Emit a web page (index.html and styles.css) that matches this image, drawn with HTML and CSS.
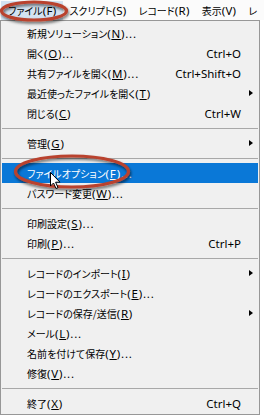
FILE: index.html
```html
<!DOCTYPE html>
<html lang="ja">
<head>
<meta charset="utf-8">
<link rel="stylesheet" href="styles.css">
</head>
<body>
<div class="bar">
  <span class="bi on">ファイル<span class="k">(F)</span></span>
  <span class="bi">スクリプト<span class="k">(S)</span></span>
  <span class="bi">レコード<span class="k">(R)</span></span>
  <span class="bi">表示<span class="k">(V)</span></span>
  <span class="bi">レ</span>
</div>
<div class="menu">
  <div class="item"><span>新規ソリューション<span class="k">(<u>N</u>)...</span></span><span class="sc"></span><span></span></div>
  <div class="item"><span>開く<span class="k">(<u>O</u>)...</span></span><span class="sc">Ctrl+O</span><span></span></div>
  <div class="item"><span>共有ファイルを開く<span class="k">(<u>M</u>)...</span></span><span class="sc">Ctrl+Shift+O</span><span></span></div>
  <div class="item"><span>最近使ったファイルを開く<span class="k">(<u>T</u>)</span></span><span class="sc"></span><span class="ar"></span></div>
  <div class="item"><span>閉じる<span class="k">(<u>C</u>)</span></span><span class="sc">Ctrl+W</span><span></span></div>
  <div class="sep"></div>
  <div class="item"><span>管理<span class="k">(<u>G</u>)</span></span><span class="sc"></span><span class="ar"></span></div>
  <div class="sep"></div>
  <div class="item sel"><span>ファイルオプション<span class="k">(<u>F</u>)...</span></span><span class="sc"></span><span></span></div>
  <div class="item"><span>パスワード変更<span class="k">(<u>W</u>)...</span></span><span class="sc"></span><span></span></div>
  <div class="sep"></div>
  <div class="item"><span>印刷設定<span class="k">(<u>S</u>)...</span></span><span class="sc"></span><span></span></div>
  <div class="item"><span>印刷<span class="k">(<u>P</u>)...</span></span><span class="sc">Ctrl+P</span><span></span></div>
  <div class="sep"></div>
  <div class="item"><span>レコードのインポート<span class="k">(<u>I</u>)</span></span><span class="sc"></span><span class="ar"></span></div>
  <div class="item"><span>レコードのエクスポート<span class="k">(<u>E</u>)...</span></span><span class="sc"></span><span></span></div>
  <div class="item"><span>レコードの保存/送信<span class="k">(<u>R</u>)</span></span><span class="sc"></span><span class="ar"></span></div>
  <div class="item"><span>メール<span class="k">(<u>L</u>)...</span></span><span class="sc"></span><span></span></div>
  <div class="item"><span>名前を付けて保存<span class="k">(<u>Y</u>)...</span></span><span class="sc"></span><span></span></div>
  <div class="item"><span>修復<span class="k">(<u>V</u>)...</span></span><span class="sc"></span><span></span></div>
  <div class="sep"></div>
  <div class="item"><span>終了<span class="k">(<u>X</u>)</span></span><span class="sc">Ctrl+Q</span><span></span></div>
</div>
<svg class="overlay" width="264" height="416" viewBox="0 0 264 416">
  <defs>
    <filter id="sh" x="-20%" y="-50%" width="140%" height="200%">
      <feGaussianBlur in="SourceAlpha" stdDeviation="1.8"/>
      <feOffset dx="1" dy="1.5" result="b"/>
      <feComponentTransfer><feFuncA type="linear" slope="0.6"/></feComponentTransfer>
      <feMerge><feMergeNode/><feMergeNode in="SourceGraphic"/></feMerge>
    </filter>
  </defs>
  <ellipse cx="34" cy="11" rx="32.5" ry="9" fill="none" stroke="#b9432f" stroke-width="3.2" filter="url(#sh)"/>
  <ellipse cx="72" cy="171.5" rx="56.5" ry="15.5" fill="none" stroke="#b9432f" stroke-width="3.2" filter="url(#sh)"/>
  <path d="M50.5 172.5 L50.5 186 L53.5 183 L56 188.5 L58 187.6 L55.6 182.2 L60 182.2 Z" fill="#fff" stroke="#000" stroke-width="1" stroke-linejoin="round"/>
</svg>
</body>
</html>
```

FILE: styles.css
```css
html, body {
  margin: 0;
  padding: 0;
}
body {
  width: 264px;
  height: 416px;
  overflow: hidden;
  position: relative;
  background: #ffffff;
  color: #000;
  font-family: "Noto Sans CJK JP", sans-serif;
  font-size: 10px;
  font-feature-settings: "palt";
}
.k {
  font-family: "Noto Sans", "Noto Sans CJK JP", sans-serif;
  font-size: 11.5px;
  letter-spacing: 0.8px;
  font-feature-settings: normal;
}
.bar {
  height: 20px;
  display: flex;
  align-items: center;
  padding-left: 1px;
  background: #fbfbfb;
}
.bi {
  height: 19px;
  line-height: 19px;
  padding: 0 6px;
  white-space: nowrap;
}
.bi .k {
  letter-spacing: 0.3px;
}
.bi.on {
  background: #d3e3f2;
  padding: 0 7px;
}
.menu {
  width: 258px;
  border: 1px solid #979797;
  padding: 2px 0 1px 0;
  background: #f0f0f0;
}
.item {
  display: grid;
  grid-template-columns: 1fr auto 17px;
  align-items: center;
  height: 20px;
  margin: 0 1px;
  padding-left: 25px;
  white-space: nowrap;
}
.item.sel {
  background: #0a78d7;
  color: #fff;
}
.sc {
  font-family: "Noto Sans", sans-serif;
  font-size: 11.5px;
}
.ar {
  width: 0;
  height: 0;
  margin-left: 8px;
  border-left: 4px solid #000;
  border-top: 3.5px solid transparent;
  border-bottom: 3.5px solid transparent;
}
.sep {
  height: 1px;
  margin: 5px 1px 4px 1px;
  background: #a8a8a8;
}
.overlay {
  position: absolute;
  left: 0;
  top: 0;
  pointer-events: none;
}
```
